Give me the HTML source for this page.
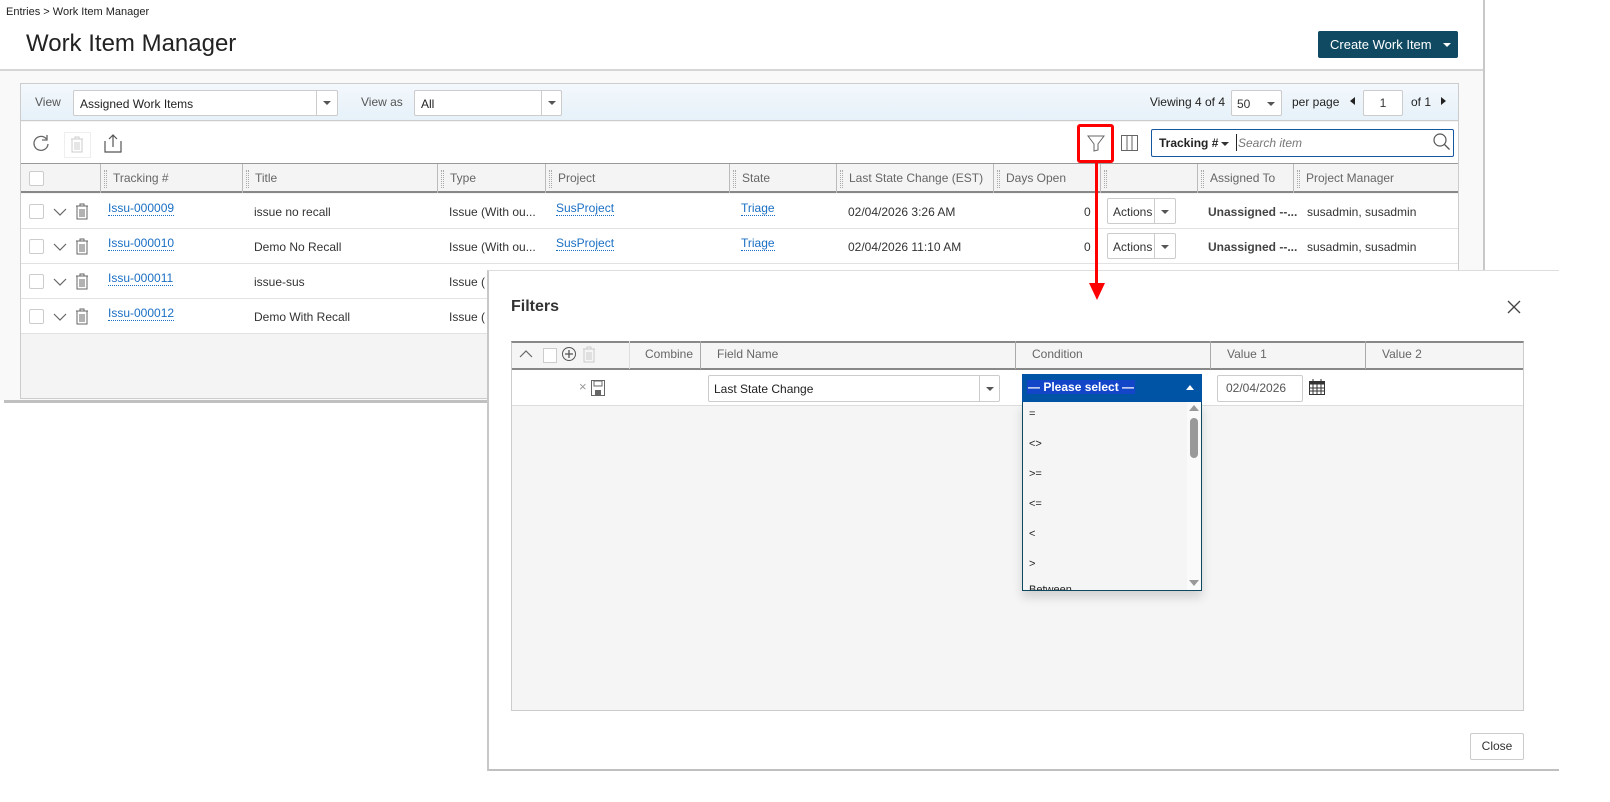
<!DOCTYPE html>
<html><head><meta charset="utf-8"><style>
*{box-sizing:border-box;margin:0;padding:0}
body{width:1610px;height:802px;position:relative;background:#fff;font-family:"Liberation Sans",sans-serif;font-size:12px;color:#333;overflow:hidden}
.a{position:absolute}
.lnk{color:#1a6fc4;border-bottom:1px dotted #1a6fc4;line-height:13px}
.hd{position:absolute;top:164px;height:29px;line-height:28px;color:#666;border-left:1px solid #bbb}
.hd span{margin-left:12px}
.grip{position:absolute;left:3px;top:6px;width:3px;height:18px;border-left:1px dotted #aaa;border-right:1px dotted #aaa}
.cb{position:absolute;width:15px;height:15px;border:1px solid #ccc;background:#fff;border-radius:2px}
.row{position:absolute;left:21px;width:1437px;height:35px;border-bottom:1px solid #e2e2e2;background:#fff}
.row div{position:absolute;top:11px}
.sel{position:absolute;background:#fff;border:1px solid #ccc;border-radius:2px}
.caret{width:0;height:0;border-left:4px solid transparent;border-right:4px solid transparent;border-top:4px solid #555;position:absolute}
.fh{position:absolute;top:341px;height:28px;line-height:27px;color:#666;border-left:1px solid #aaa}
.opt{position:absolute;left:6px;font-size:11px;color:#222}
</style></head><body>
<div class="a" style="left:6px;top:6px;font-size:11px;color:#222">Entries &gt; Work Item Manager</div>
<div class="a" style="left:26px;top:30px;font-size:24px;color:#222">Work Item Manager</div>
<div class="a" style="left:1318px;top:31px;width:140px;height:27px;background:#0f4a62;border-radius:2px;color:#fff;font-size:13px;line-height:27px;padding-left:12px">Create Work Item<div class="caret" style="left:125px;top:12px;border-top-color:#fff"></div></div>
<div class="a" style="left:0;top:69px;width:1484px;height:2px;background:#d6d6d6"></div>
<div class="a" style="left:0;top:71px;width:1484px;height:329px;background:#f9f9f9"></div>
<div class="a" style="left:1483px;top:0;width:2px;height:270px;background:#c8c8c8"></div>
<div class="a" style="left:4px;top:400px;width:484px;height:3px;background:#c0c0c0"></div>
<!-- panel -->
<div class="a" style="left:20px;top:83px;width:1439px;height:316px;border:1px solid #ccc;background:#f4f4f4"></div>
<div class="a" style="left:21px;top:84px;width:1437px;height:37px;background:linear-gradient(#f3f8fc,#e6f1f9);border-bottom:1px solid #ccc"></div>
<div class="a" style="left:35px;top:95px;color:#555">View</div>
<div class="sel" style="left:73px;top:90px;width:265px;height:26px"><span class="a" style="left:6px;top:6px;color:#222">Assigned Work Items</span><div class="a" style="left:242px;top:0;height:24px;border-left:1px solid #ccc"></div><div class="caret" style="left:249px;top:10px"></div></div>
<div class="a" style="left:361px;top:95px;color:#555">View as</div>
<div class="sel" style="left:414px;top:90px;width:148px;height:26px"><span class="a" style="left:6px;top:6px;color:#222">All</span><div class="a" style="left:126px;top:0;height:24px;border-left:1px solid #ccc"></div><div class="caret" style="left:133px;top:10px"></div></div>
<div class="a" style="left:1125px;width:100px;text-align:right;top:95px;color:#222">Viewing 4 of 4</div>
<div class="sel" style="left:1231px;top:90px;width:51px;height:26px"><span class="a" style="left:5px;top:6px">50</span><div class="caret" style="left:35px;top:11px"></div></div>
<div class="a" style="left:1292px;top:95px;color:#222">per page</div>
<div class="a" style="left:1350px;top:97px;width:0;height:0;border-top:4px solid transparent;border-bottom:4px solid transparent;border-right:5px solid #222"></div>
<div class="sel" style="left:1363px;top:90px;width:40px;height:26px;text-align:center;line-height:24px">1</div>
<div class="a" style="left:1411px;top:95px;color:#222">of 1</div>
<div class="a" style="left:1441px;top:97px;width:0;height:0;border-top:4px solid transparent;border-bottom:4px solid transparent;border-left:5px solid #222"></div>
<!-- toolbar -->
<div class="a" style="left:21px;top:122px;width:1437px;height:42px;background:#fff;border-bottom:1px solid #999"></div>
<svg class="a" style="left:32px;top:134px" width="18" height="18" viewBox="0 0 18 18"><path d="M14.5 5A7 7 0 1 0 16 10" fill="none" stroke="#666" stroke-width="1.3"/><path d="M15 1v5h-5" fill="none" stroke="#666" stroke-width="1.3"/></svg>
<div class="a" style="left:64px;top:132px;width:27px;height:26px;border:1px solid #eee"></div>
<svg class="a" style="left:70px;top:136px" width="14" height="17"><path d="M1 3h12M5 3V1h4v2M2 3v13h10V3M5 6v8M7 6v8M9 6v8" fill="none" stroke="#ccc"/></svg>
<svg class="a" style="left:104px;top:133px" width="18" height="20"><path d="M1 8v11h16V8M9 2v12M5 6l4-4 4 4" fill="none" stroke="#555" stroke-width="1.2"/></svg>
<svg class="a" style="left:1087px;top:134px" width="18" height="18"><path d="M1 2h16l-6 8v6l-4 1v-7z" fill="none" stroke="#666" stroke-width="1"/></svg>
<div class="a" style="left:1077px;top:124px;width:37px;height:39px;border:3px solid #f00;border-radius:3px"></div>
<svg class="a" style="left:1121px;top:135px" width="18" height="17"><rect x="0.5" y="0.5" width="16" height="15" fill="none" stroke="#666"/><path d="M6 1v15M11 1v15" stroke="#666"/></svg>
<div class="a" style="left:1151px;top:129px;width:303px;height:28px;border:1px solid #1557a0;background:#fff;border-radius:2px"></div>
<div class="a" style="left:1159px;top:136px;font-weight:bold;color:#222">Tracking #</div>
<div class="caret" style="left:1221px;top:142px;border-top-color:#333"></div>
<div class="a" style="left:1236px;top:134px;width:1px;height:17px;background:#222"></div>
<div class="a" style="left:1238px;top:136px;font-style:italic;color:#777">Search item</div>
<svg class="a" style="left:1433px;top:133px" width="18" height="18"><circle cx="7" cy="7" r="6" fill="none" stroke="#555" stroke-width="1.2"/><path d="M11.5 11.5l5 5" stroke="#555" stroke-width="1.3"/></svg>
<!-- header -->
<div class="a" style="left:21px;top:164px;width:1437px;height:29px;background:#f4f4f4;border-bottom:2px solid #888"></div>
<div class="cb" style="left:29px;top:171px;width:15px;height:15px"></div>
<div class="hd" style="left:100px"><div class="grip"></div><span>Tracking #</span></div>
<div class="hd" style="left:242px"><div class="grip"></div><span>Title</span></div>
<div class="hd" style="left:437px"><div class="grip"></div><span>Type</span></div>
<div class="hd" style="left:545px"><div class="grip"></div><span>Project</span></div>
<div class="hd" style="left:729px"><div class="grip"></div><span>State</span></div>
<div class="hd" style="left:836px"><div class="grip"></div><span>Last State Change (EST)</span></div>
<div class="hd" style="left:993px"><div class="grip"></div><span>Days Open</span></div>
<div class="hd" style="left:1100px"><div class="grip"></div></div>
<div class="hd" style="left:1197px"><div class="grip"></div><span>Assigned To</span></div>
<div class="hd" style="left:1293px"><div class="grip"></div><span>Project Manager</span></div>
<!-- rows -->
<div class="row" style="top:194px"><div class="cb" style="left:8px;top:10px"></div><svg style="position:absolute;left:32px;top:14px" width="14" height="8"><path d="M1 1l6 6 6-6" fill="none" stroke="#666" stroke-width="1.2"/></svg><svg style="position:absolute;left:54px;top:9px" width="14" height="17"><path d="M1 3h12M5 3V1h4v2M2 3v13h10V3M5 6v8M7 6v8M9 6v8" fill="none" stroke="#666"/></svg><div class="lnk" style="left:87px;top:8px">Issu-000009</div><div style="left:233px">issue no recall</div><div style="left:428px">Issue (With ou...</div><div class="lnk" style="left:535px;top:8px">SusProject</div><div class="lnk" style="left:720px;top:8px">Triage</div><div style="left:827px">02/04/2026 3:26 AM</div><div style="left:1063px">0</div><div class="sel" style="left:1086px;top:4px;width:69px;height:26px"><span class="a" style="left:5px;top:6px">Actions</span><div class="a" style="left:46px;top:0;height:24px;border-left:1px solid #ccc"></div><div class="caret" style="left:53px;top:11px"></div></div><div style="left:1187px;font-weight:bold;color:#444">Unassigned --...</div><div style="left:1286px">susadmin, susadmin</div></div>
<div class="row" style="top:229px"><div class="cb" style="left:8px;top:10px"></div><svg style="position:absolute;left:32px;top:14px" width="14" height="8"><path d="M1 1l6 6 6-6" fill="none" stroke="#666" stroke-width="1.2"/></svg><svg style="position:absolute;left:54px;top:9px" width="14" height="17"><path d="M1 3h12M5 3V1h4v2M2 3v13h10V3M5 6v8M7 6v8M9 6v8" fill="none" stroke="#666"/></svg><div class="lnk" style="left:87px;top:8px">Issu-000010</div><div style="left:233px">Demo No Recall</div><div style="left:428px">Issue (With ou...</div><div class="lnk" style="left:535px;top:8px">SusProject</div><div class="lnk" style="left:720px;top:8px">Triage</div><div style="left:827px">02/04/2026 11:10 AM</div><div style="left:1063px">0</div><div class="sel" style="left:1086px;top:4px;width:69px;height:26px"><span class="a" style="left:5px;top:6px">Actions</span><div class="a" style="left:46px;top:0;height:24px;border-left:1px solid #ccc"></div><div class="caret" style="left:53px;top:11px"></div></div><div style="left:1187px;font-weight:bold;color:#444">Unassigned --...</div><div style="left:1286px">susadmin, susadmin</div></div>
<div class="row" style="top:264px"><div class="cb" style="left:8px;top:10px"></div><svg style="position:absolute;left:32px;top:14px" width="14" height="8"><path d="M1 1l6 6 6-6" fill="none" stroke="#666" stroke-width="1.2"/></svg><svg style="position:absolute;left:54px;top:9px" width="14" height="17"><path d="M1 3h12M5 3V1h4v2M2 3v13h10V3M5 6v8M7 6v8M9 6v8" fill="none" stroke="#666"/></svg><div class="lnk" style="left:87px;top:8px">Issu-000011</div><div style="left:233px">issue-sus</div><div style="left:428px">Issue (</div></div>
<div class="row" style="top:299px"><div class="cb" style="left:8px;top:10px"></div><svg style="position:absolute;left:32px;top:14px" width="14" height="8"><path d="M1 1l6 6 6-6" fill="none" stroke="#666" stroke-width="1.2"/></svg><svg style="position:absolute;left:54px;top:9px" width="14" height="17"><path d="M1 3h12M5 3V1h4v2M2 3v13h10V3M5 6v8M7 6v8M9 6v8" fill="none" stroke="#666"/></svg><div class="lnk" style="left:87px;top:8px">Issu-000012</div><div style="left:233px">Demo With Recall</div><div style="left:428px">Issue (</div></div>
<!-- dialog -->
<div class="a" style="left:487px;top:270px;width:1072px;height:501px;background:#fff;border-left:2px solid #c8c8c8;border-bottom:2px solid #c0c0c0;border-top:1px solid #ddd"></div>
<div class="a" style="left:511px;top:298px;font-size:16px;font-weight:bold;color:#333">Filters</div>
<svg class="a" style="left:1507px;top:300px" width="14" height="14"><path d="M1 1l12 12M13 1L1 13" stroke="#444" stroke-width="1.3"/></svg>
<div class="a" style="left:511px;top:341px;width:1013px;height:370px;background:#f5f5f5;border:1px solid #ccc;border-top:2px solid #888"></div>
<div class="a" style="left:512px;top:368px;width:1011px;height:2px;background:#888"></div>
<div class="a" style="left:512px;top:370px;width:1011px;height:36px;background:#fff;border-bottom:1px solid #ddd"></div>
<svg class="a" style="left:519px;top:349px" width="14" height="10"><path d="M1 8l6-6 6 6" fill="none" stroke="#666" stroke-width="1.2"/></svg>
<div class="a" style="left:543px;top:348px;width:14px;height:15px;border:1px solid #ccc;background:#fff"></div>
<svg class="a" style="left:561px;top:346px" width="16" height="16"><circle cx="8" cy="8" r="6.5" fill="none" stroke="#555"/><path d="M8 4v8M4 8h8" stroke="#555" stroke-width="1.3"/></svg>
<svg class="a" style="left:582px;top:346px" width="14" height="17"><path d="M1 3h12M5 3V1h4v2M2 3v13h10V3M5 6v8M7 6v8M9 6v8" fill="none" stroke="#ccc"/></svg>
<div class="fh" style="left:629px;border-left-color:#ddd"><span style="margin-left:15px">Combine</span></div>
<div class="fh" style="left:700px"><span style="margin-left:16px">Field Name</span></div>
<div class="fh" style="left:1015px"><span style="margin-left:16px">Condition</span></div>
<div class="fh" style="left:1210px"><span style="margin-left:16px">Value 1</span></div>
<div class="fh" style="left:1365px"><span style="margin-left:16px">Value 2</span></div>
<div class="a" style="left:579px;top:379px;color:#999;font-size:13px">×</div>
<svg class="a" style="left:591px;top:380px" width="14" height="16"><rect x="0.5" y="0.5" width="13" height="15" fill="none" stroke="#666"/><rect x="3" y="1" width="8" height="5" fill="none" stroke="#666"/><rect x="4" y="10" width="6" height="5" fill="#666"/></svg>
<div class="sel" style="left:708px;top:375px;width:292px;height:27px"><span class="a" style="left:5px;top:6px;color:#222">Last State Change</span><div class="a" style="left:270px;top:0;height:25px;border-left:1px solid #ccc"></div><div class="caret" style="left:277px;top:11px"></div></div>
<div class="a" style="left:1022px;top:374px;width:180px;height:28px;background:#0054a6"></div>
<div class="a" style="left:1027px;top:380px;background:#1245c8;color:#fff;font-weight:bold;padding:0 1px">— Please select —</div>
<div class="a" style="left:1186px;top:385px;width:0;height:0;border-left:4px solid transparent;border-right:4px solid transparent;border-bottom:5px solid #fff"></div>
<div class="a" style="left:1022px;top:402px;width:180px;height:189px;background:#f5f5f5;border:1px solid #0d4a62;border-top:none;box-shadow:0 6px 10px rgba(0,0,0,.15);overflow:hidden">
<div class="a" style="left:164px;top:0;width:15px;height:189px;background:#fafafa"></div>
<div class="a" style="left:166px;top:3px;width:0;height:0;border-left:5px solid transparent;border-right:5px solid transparent;border-bottom:6px solid #999"></div>
<div class="a" style="left:167px;top:16px;width:8px;height:40px;background:#999;border-radius:4px"></div>
<div class="a" style="left:166px;top:178px;width:0;height:0;border-left:5px solid transparent;border-right:5px solid transparent;border-top:6px solid #999"></div>
<div class="opt" style="top:6px">=</div><div class="opt" style="top:36px">&lt;&gt;</div><div class="opt" style="top:66px">&gt;=</div><div class="opt" style="top:96px">&lt;=</div><div class="opt" style="top:126px">&lt;</div><div class="opt" style="top:156px">&gt;</div><div class="opt" style="top:182px">Between</div>
</div>
<div class="sel" style="left:1217px;top:375px;width:86px;height:27px;color:#555;font-size:12px;line-height:25px;padding-left:8px">02/04/2026</div>
<svg class="a" style="left:1309px;top:379px" width="16" height="16"><rect x="0.5" y="2.5" width="15" height="13" fill="none" stroke="#333"/><rect x="0.5" y="2.5" width="15" height="3" fill="#333"/><path d="M4 0v4M12 0v4M0 9h16M0 12h16M4 5v11M8 5v11M12 5v11" stroke="#333"/></svg>
<div class="sel" style="left:1470px;top:733px;width:54px;height:27px;text-align:center;line-height:25px;color:#333">Close</div>
<!-- arrow -->
<div class="a" style="left:1095px;top:163px;width:3px;height:122px;background:#f00"></div>
<div class="a" style="left:1089px;top:283px;width:0;height:0;border-left:8px solid transparent;border-right:8px solid transparent;border-top:17px solid #f00"></div>
</body></html>
